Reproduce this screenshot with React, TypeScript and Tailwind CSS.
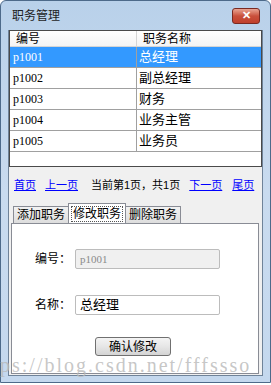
import React from 'react';

const cjk = "font-['Liberation_Sans','Noto_Sans_CJK_SC',sans-serif]";
const serif = "font-['Liberation_Serif','Noto_Sans_CJK_SC',serif]";

const rows = [
  { id: 'p1001', name: '总经理' },
  { id: 'p1002', name: '副总经理' },
  { id: 'p1003', name: '财务' },
  { id: 'p1004', name: '业务主管' },
  { id: 'p1005', name: '业务员' },
];

export default function App() {
  return (
    <div className={`relative h-[385px] w-[271px] overflow-hidden bg-white ${cjk} text-[12px] text-black`}>
      <div className="flex h-[383px] w-[271px] flex-col rounded-t-[6px] border border-[#4d6a8a] bg-gradient-to-b from-[#b9d1ea] via-[#c9dbef] to-[#c4d8ee]">
        {/* title bar */}
        <div className="flex h-[29px] shrink-0 items-center justify-between pl-[11px] pr-[10px]">
          <span className="text-[12px] leading-none text-[#1e1e1e]">职务管理</span>
          <div className="flex h-[16px] w-[28px] items-center justify-center rounded-[3px] border border-[#7a2a22] bg-gradient-to-b from-[#e8a493] via-[#c9503c] to-[#c0402c] text-[11px] font-bold leading-none text-white">
            ✕
          </div>
        </div>

        {/* client area */}
        <div className="mx-[7px] flex h-[346px] shrink-0 flex-col border-x border-b border-[#6f8399] bg-[#f0f0f0]">
          {/* grid */}
          <div className="flex h-[137px] shrink-0 flex-col border border-[#4a4a4a] bg-white">
            <div className="flex h-[16px] shrink-0 items-center border-b border-[#d5d5d5] bg-gradient-to-b from-white to-[#f4f4f4]">
              <div className="w-[127px] border-r border-[#d5d5d5] pl-[6px] leading-[16px]">编号</div>
              <div className="pl-[6px] leading-[16px]">职务名称</div>
            </div>
            {rows.map((r, i) => (
              <div
                key={r.id}
                className={`flex h-[21px] shrink-0 items-center border-b border-[#a0a0a0] ${i === 0 ? 'bg-[#3399ff] text-white' : ''}`}
              >
                <div className={`flex h-full w-[127px] items-center border-r border-[#a0a0a0] pl-[3px] ${serif} text-[12px]`}>
                  {r.id}
                </div>
                <div className="pl-[2px] text-[13px]">{r.name}</div>
              </div>
            ))}
          </div>

          {/* pager */}
          <div className="mt-[11px] flex h-[14px] items-center whitespace-nowrap pl-[5px] text-[11px] leading-none">
            <span className="text-[#0000ff] underline">首页</span>
            <span className="ml-[9px] text-[#0000ff] underline">上一页</span>
            <span className="ml-[13px]">当前第1页，共1页</span>
            <span className="ml-[9px] text-[#0000ff] underline">下一页</span>
            <span className="ml-[10px] text-[#0000ff] underline">尾页</span>
          </div>

          {/* tabs */}
          <div className="mt-[11px] flex items-end pl-[4px]">
            <div className="flex h-[17px] items-center border border-b-0 border-[#898c95] bg-gradient-to-b from-[#f2f2f2] to-[#dddddd] px-[3px] text-[12px]">
              添加职务
            </div>
            <div className="-mx-px flex h-[20px] items-center border border-b-0 border-[#898c95] bg-white px-[2px] text-[12px]">
              <span className="border border-dotted border-[#555] px-[1px] leading-[14px]">修改职务</span>
            </div>
            <div className="flex h-[17px] items-center border border-b-0 border-[#898c95] bg-gradient-to-b from-[#f2f2f2] to-[#dddddd] px-[3px] text-[12px]">
              删除职务
            </div>
          </div>

          {/* panel */}
          <div className="ml-[2px] mr-[3px] flex h-[151px] flex-col border border-[#898c95] bg-white">
            <div className="mt-[25px] flex items-center">
              <span className="ml-[23px] w-[40px] text-[12px]">编号：</span>
              <div className={`flex h-[20px] w-[145px] items-center rounded-[2px] border border-[#bcbcbc] bg-[#f0f0f0] pl-[4px] ${serif} text-[11px] text-[#8a8a8a]`}>
                p1001
              </div>
            </div>
            <div className="mt-[26px] flex items-center">
              <span className="ml-[23px] w-[40px] text-[12px]">名称：</span>
              <div className="flex h-[20px] w-[145px] items-center rounded-[2px] border border-[#bcbcbc] bg-white pl-[4px] text-[13px]">
                总经理
              </div>
            </div>
            <div className="mt-[22px] flex justify-center pr-[4px]">
              <div className="flex h-[19px] w-[76px] items-center justify-center rounded-[3px] border border-[#707070] bg-gradient-to-b from-[#f4f4f4] via-[#e6e6e6] to-[#d4d4d4] text-[12px]">
                确认修改
              </div>
            </div>
          </div>
        </div>
      </div>

      {/* watermark */}
      <div className="pointer-events-none absolute left-0 top-[355px] whitespace-nowrap font-['Liberation_Serif',serif] text-[20px] leading-none tracking-[2px] text-[#b8b8b8]/80">
        ps://blog.csdn.net/fffssso
      </div>
    </div>
  );
}
